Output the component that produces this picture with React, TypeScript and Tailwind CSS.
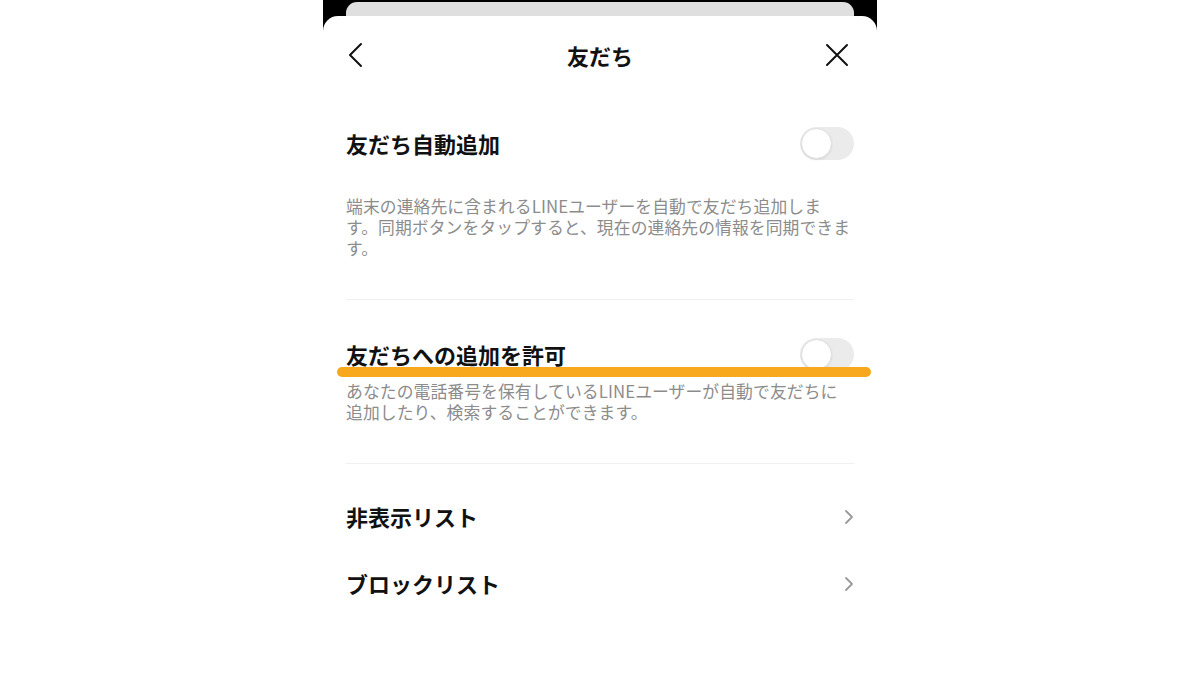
import React from "react";

const font = { fontFamily: '"Noto Sans CJK JP", "Noto Sans", sans-serif' };

// ---------------------------------------------------------------------------
// Small pieces
// ---------------------------------------------------------------------------

function Toggle() {
  return (
    <div className="relative h-[33px] w-[54px] shrink-0 rounded-full bg-[#ebebeb]">
      <div className="absolute left-[1px] top-[1px] h-[31px] w-[31px] rounded-full border border-[#dedede] bg-white shadow-[0_1px_2px_rgba(0,0,0,0.08)]" />
    </div>
  );
}

function ChevronRight() {
  return (
    <svg width="10" height="16" viewBox="0 0 10 16" fill="none" className="shrink-0">
      <path d="M2 2l6 6-6 6" stroke="#9a9a9a" strokeWidth="1.8" strokeLinecap="round" strokeLinejoin="round" />
    </svg>
  );
}

function Divider() {
  return <div className="mx-[23px] h-px bg-[#f0f0f0]" />;
}

// ---------------------------------------------------------------------------
// Page
// ---------------------------------------------------------------------------

export default function App() {
  return (
    <div className="flex h-[696px] w-full justify-center overflow-hidden bg-white" style={font}>
      <div className="flex w-[554px] flex-col bg-black">
        {/* sheet stacked behind */}
        <div className="px-[23px] pt-[2px]">
          <div className="h-[14px] rounded-t-[11px] bg-[#dfdfdf]" />
        </div>

        <div className="flex flex-1 flex-col rounded-t-[15px] bg-white">
          {/* Header */}
          <div className="grid h-[78px] grid-cols-[1fr_auto_1fr] items-center px-[25px]">
            <svg width="16" height="26" viewBox="0 0 16 26" fill="none">
              <path d="M13 2L2 13l11 11" stroke="#111" strokeWidth="2" strokeLinecap="round" strokeLinejoin="round" />
            </svg>
            <h1 className="text-[22px] font-bold text-[#111]">友だち</h1>
            <svg width="24" height="24" viewBox="0 0 24 24" fill="none" className="mr-[3px] justify-self-end">
              <path d="M2 2l20 20M22 2L2 22" stroke="#111" strokeWidth="2" strokeLinecap="round" />
            </svg>
          </div>

          {/* Auto add */}
          <div className="px-[23px] pb-[40px] pt-[17px]">
            <div className="flex h-[64px] items-center justify-between">
              <span className="text-[22px] font-bold text-[#111]">友だち自動追加</span>
              <Toggle />
            </div>
            <p className="mt-[21px] whitespace-nowrap text-[16.8px] leading-[21px] tracking-[0.1px] text-[#8c8c8c]">
              端末の連絡先に含まれるLINEユーザーを自動で友だち追加しま
              <br />
              す。同期ボタンをタップすると、現在の連絡先の情報を同期できま
              <br />
              す。
            </p>
          </div>
          <Divider />

          {/* Allow add */}
          <div className="relative px-[23px] pb-[40px] pt-[32px]">
            <div className="flex h-[44px] items-center justify-between">
              <span className="text-[22px] font-bold text-[#111]">友だちへの追加を許可</span>
              <Toggle />
            </div>
            <p className="mt-[5px] whitespace-nowrap text-[16.8px] leading-[21px] tracking-[0.1px] text-[#8c8c8c]">
              あなたの電話番号を保有しているLINEユーザーが自動で友だちに
              <br />
              追加したり、検索することができます。
            </p>
            {/* highlight marker */}
            <div className="absolute left-[14px] top-[67px] h-[10px] w-[534px] rounded-full bg-[#f7a81c]" />
          </div>
          <Divider />

          {/* Lists */}
          <div className="px-[23px] pt-[19px]">
            <div className="flex h-[67px] items-center justify-between">
              <span className="text-[22px] font-bold text-[#111]">非表示リスト</span>
              <ChevronRight />
            </div>
            <div className="flex h-[67px] items-center justify-between">
              <span className="text-[22px] font-bold text-[#111]">ブロックリスト</span>
              <ChevronRight />
            </div>
          </div>
        </div>
      </div>
    </div>
  );
}
